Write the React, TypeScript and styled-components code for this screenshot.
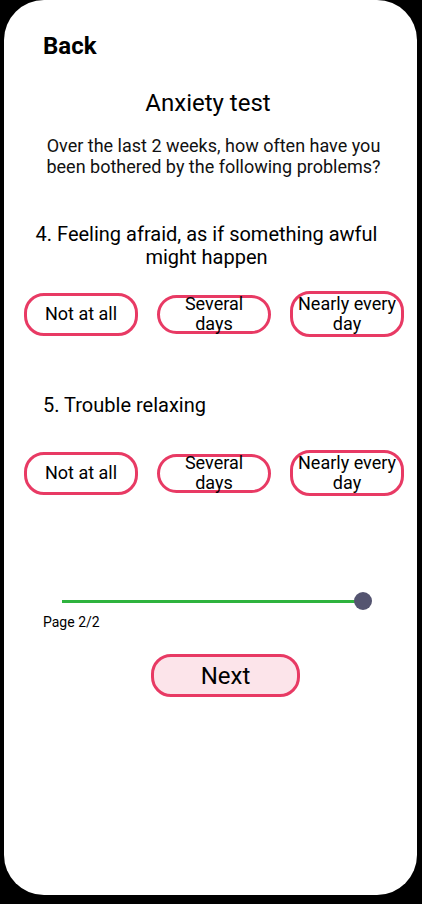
import styled, { createGlobalStyle } from "styled-components";

const GlobalStyle = createGlobalStyle`
    body {
        margin: 0;
        background: #000;
        font-family: Roboto, "Liberation Sans", sans-serif;
        color: #111;
    }
`;

const OPTIONS = [
    { label: "Not at all", height: 43 },
    { label: "Several days", height: 39 },
    { label: "Nearly every day", height: 46 },
];

const QUESTIONS = [
    { text: "4. Feeling afraid, as if something awful might happen", center: true },
    { text: "5. Trouble relaxing", center: false },
];

const App = () => {
    return (
        <Phone>
            <GlobalStyle />
            <BackLink>Back</BackLink>
            <Title>Anxiety test</Title>
            <Intro>
                Over the last 2 weeks, how often have you been bothered by the
                following problems?
            </Intro>
            {QUESTIONS.map((q, i) => (
                <div key={q.text}>
                    <Question $center={q.center} $first={i === 0}>
                        {q.text}
                    </Question>
                    <Options $first={i === 0}>
                        {OPTIONS.map((o) => (
                            <Option key={o.label} $h={o.height}>
                                {o.label}
                            </Option>
                        ))}
                    </Options>
                </div>
            ))}
            <Progress>
                <Line />
                <Knob />
            </Progress>
            <PageLabel>Page 2/2</PageLabel>
            <NextButton>Next</NextButton>
        </Phone>
    );
};

const Phone = styled.div`
    width: 413px;
    height: 895px;
    margin-left: 4px;
    padding-top: 32px;
    box-sizing: border-box;
    background: #fff;
    border-radius: 40px;
    display: flex;
    flex-direction: column;
    overflow: hidden;
`;

const BackLink = styled.div`
    margin-left: 39px;
    font-size: 24px;
    font-weight: 700;
    color: #000;
`;

const Title = styled.h1`
    margin: 29px 0 0;
    padding-right: 5px;
    text-align: center;
    font-size: 24px;
    font-weight: 400;
    color: #000;
`;

const Intro = styled.p`
    margin: 18px 0 0;
    padding: 0 26px 0 32px;
    text-align: center;
    font-size: 18px;
    line-height: 21px;
`;

const Question = styled.div<{ $center: boolean; $first: boolean }>`
    margin-top: ${(p) => (p.$first ? "46px" : "57px")};
    padding: ${(p) => (p.$center ? "0 24px 0 16px" : "0 0 0 39px")};
    text-align: ${(p) => (p.$center ? "center" : "left")};
    font-size: 20px;
    line-height: 23px;
    color: #000;
`;

const Options = styled.div<{ $first: boolean }>`
    margin-top: ${(p) => (p.$first ? "22px" : "33px")};
    height: 46px;
    padding-left: 20px;
    display: flex;
    align-items: center;
    gap: 19px;
`;

const Option = styled.button<{ $h: number }>`
    width: 114px;
    height: ${(p) => p.$h}px;
    padding: 0 5px;
    box-sizing: border-box;
    border: 3px solid #e83a64;
    border-radius: 20px;
    background: #fff;
    font-family: Roboto, "Liberation Sans", sans-serif;
    font-size: 18px;
    line-height: 20px;
    color: #000;
    text-align: center;
    display: flex;
    align-items: center;
    justify-content: center;
    overflow: visible;
`;

const Progress = styled.div`
    margin: 96px 0 0 58px;
    width: 310px;
    height: 18px;
    display: flex;
    align-items: center;
`;

const Line = styled.div`
    flex: 1;
    height: 3px;
    background: #2fb33e;
    margin-right: -9px;
`;

const Knob = styled.div`
    width: 18px;
    height: 18px;
    border-radius: 50%;
    background: #545470;
`;

const PageLabel = styled.div`
    margin: 4px 0 0 39px;
    font-size: 14px;
    color: #000;
`;

const NextButton = styled.button`
    margin: 24px 0 0 147px;
    width: 149px;
    height: 43px;
    border: 3px solid #e83a64;
    border-radius: 20px;
    background: #fce4ea;
    font-family: Roboto, "Liberation Sans", sans-serif;
    font-size: 24px;
    color: #000;
    cursor: pointer;
`;

export default App;
